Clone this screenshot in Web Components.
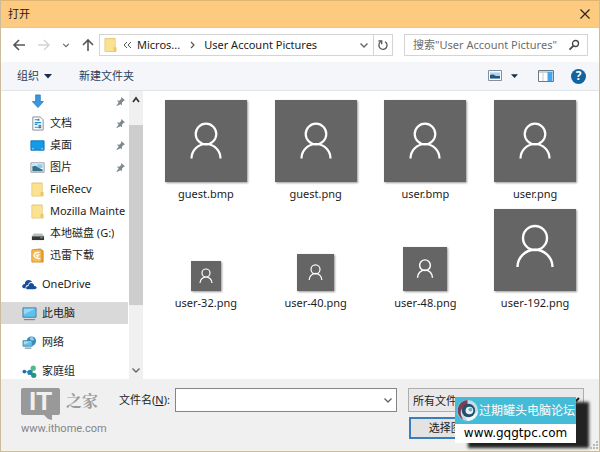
<!DOCTYPE html>
<html lang="zh-CN">
<head>
<meta charset="utf-8">
<title>打开</title>
<style>
html,body{margin:0;height:100%}
body{font:11px/16px "Noto Sans","Noto Sans CJK SC",sans-serif;color:#1c1c1c;background:#fff}
</style>
</head>
<body>
<open-dialog></open-dialog>
<script>
const ICONS = {
  back:['0 0 14 14','<path d="M13 7H2M7 2L2 7l5 5" fill="none" stroke="#555" stroke-width="1.6"/>'],
  forward:['0 0 14 14','<path d="M1 7h11M7 2l5 5-5 5" fill="none" stroke="#d2d2d2" stroke-width="1.4"/>'],
  up:['0 0 14 14','<path d="M7 13V2M2 7l5-5 5 5" fill="none" stroke="#555" stroke-width="1.6"/>'],
  down:['0 0 10 10','<path d="M1.500 3.500L5 7l3.500-3.500" fill="none" stroke="#666" stroke-width="1.4"/>'],
  chevUp:['0 0 10 10','<path d="M2 7l3-4 3 4" fill="none" stroke="#333" stroke-width="1.7"/>'],
  right:['0 0 10 10','<path d="M4 2l3 3-3 3" fill="none" stroke="#555" stroke-width="1.2"/>'],
  guillemet:['0 0 10 10','<path d="M5 2L2 5l3 3M9 2L6 5l3 3" fill="none" stroke="#555" stroke-width="1"/>'],
  caret:['0 0 10 10','<path d="M0 2.500h10L5 8z" fill="#1d2b4f"/>'],
  refresh:['0 0 12 12','<path d="M8 2.7A4.1 4.1 0 1 1 3.5 3M1.5 2h3.2v3.3" fill="none" stroke="#555" stroke-width="1.3"/>'],
  close:['0 0 12 12','<path d="M1.5 1.5l9 9M10.500 1.500l-9 9" fill="none" stroke="#2c2418" stroke-width="1.2"/>'],
  search:['0 0 12 12','<circle cx="7.500" cy="4.500" r="3" fill="none" stroke="#444" stroke-width="1.300"/><path d="M5.300 6.800L1.500 10.700" stroke="#444" stroke-width="1.700"/>'],
  folder:['0 0 14 16','<path d="M1 1h11v9l1 1v4H1z" fill="#f8dc80" stroke="#e0c065" stroke-width=".8"/><path d="M1.500 2h10v8l-1.500 1v3.500H1.500z" fill="#fbe292"/><path d="M10.500 10.500h2v4h-2z" fill="#e9c45f"/>'],
  download:['0 0 14 16','<path d="M5 1h5v7h3.300L7.500 14.500 1.500 8H5z" fill="#3b96e0" stroke="#2477be" stroke-width=".8"/>'],
  doc:['0 0 14 16','<path d="M2 1h8l3 3v11H2z" fill="#fff" stroke="#808b95"/><path d="M4 4h3M4 7h7M4 9h3M8 10h3M4 12h4" stroke="#258fd0" stroke-width="1.300"/><path d="M8 11h3v2H8zM7 3h2v2H7z" fill="#3d7298"/>'],
  desktop:['0 0 16 14','<path d="M1 2h14v10H1z" fill="#159ae8" stroke="#0776bd"/><path d="M2 10.500h2M12 10.500h2" stroke="#b7e5ff"/>'],
  image:['0 0 16 14','<path d="M1 2h14v10H1z" fill="#fff" stroke="#8c9299"/><path d="M2.500 3.500h11v4h-11z" fill="#91c8ea"/><path d="M2.500 6l3-1 3 2 5 2v2h-11z" fill="#367189"/><path d="M3 5l3-1 2 1" stroke="#fff" fill="none"/>'],
  drive:['0 0 14 16','<path d="M3 8h9l2 3H1z" fill="#b9bdc0"/><path d="M1 11h13v4H1z" fill="#343638"/><path d="M10 12.500h2.500" stroke="#65cf79"/>'],
  thunder:['0 0 14 16','<path d="M1 2l9-1 3 2v12H1z" fill="#e9a333" stroke="#c77a16" stroke-width=".8"/><path d="M1.500 2.500h9v12h-9z" fill="#f8bd57"/><path d="M9 5C6 4 4 6 3 8c2 3 4 4 7 3M9 7L6 8l2 2" fill="none" stroke="#fff" stroke-width="1.300"/>'],
  cloud:['0 0 16 12','<path d="M2 10C-1 9 0 5.500 3 5.500 3 .500 9 0 11 3.500 8 3 6.500 5 6.500 6.500 4 6.500 3.500 9 4 10z" fill="#174d9b"/><path d="M6 11c-2.500 0-2-3.500 1-3.500 0-4 5.500-4 6 0 3.500 0 3.500 3.500 0 3.500z" fill="#174d9b"/>'],
  pc:['0 0 16 16','<path d="M1 2h14v10H1z" fill="#5cc1ee" stroke="#567a91"/><path d="M2 3h12L2 9z" fill="#92dafa"/><path d="M2 14.500h12" stroke="#7e8990" stroke-width="1.300"/>'],
  network:['0 0 16 16','<circle cx="10" cy="6.500" r="5" fill="#378ac2"/><path d="M8 3l3-1 2 3-3 2z" fill="#93d4ed"/><path d="M1 6h10v6H1z" fill="#60bee9" stroke="#417f9e" stroke-width=".8"/><path d="M2 7h8l-8 3z" fill="#a6e0f6"/><path d="M3 14h7" stroke="#4a7890"/>'],
  home:['0 0 16 16','<path d="M4 8l6 1 2-4M10 9l2 4" stroke="#67b8c8" stroke-width="1.500" fill="none"/><circle cx="2.500" cy="8" r="2" fill="#286da6"/><circle cx="12" cy="4.500" r="2.800" fill="#55b98b"/><circle cx="8.500" cy="9" r="2.800" fill="#2485af"/><circle cx="12.500" cy="12" r="2.800" fill="#26957e"/>'],
  pin:['0 0 12 12','<path d="M7 1l4 4-1.500.3-2 2 .2 2.700L6 9 2 11 1.500 10.500 4 7 2 5l2.700.2 2-2z" fill="#7e8990"/>'],
  view:['0 0 14 12','<path d="M.5.500h13v10H.5z" fill="#f8fbff" stroke="#888e9c"/><path d="M2 2.500h10v6H2z" fill="#a9d3ef"/><path d="M2 5l3-.5 3 1.500h4v2.500H2z" fill="#235582"/>'],
  pane:['0 0 16 12','<path d="M.5.500h15v11H.5z" fill="#fff" stroke="#707880"/><path d="M1 1h14v2H1z" fill="#c8d4dd"/><path d="M9.500 2h5v9h-5z" fill="#44a5ed"/><path d="M5 2v9" stroke="#c8ccd0"/>'],
  user:['0 0 82 82','<circle cx="41" cy="34" r="10.300" fill="none" stroke="#fff" stroke-width="2.200"/><path d="M26.500 58.500a14.500 14.500 0 0 1 29 0" fill="none" stroke="#fff" stroke-width="2.200"/>'],
  userSmall:['0 0 30 30','<circle cx="15" cy="12" r="4" fill="none" stroke="#fff" stroke-width="1.200"/><path d="M9 22a6 6 0 0 1 12 0" fill="none" stroke="#fff" stroke-width="1.200"/>'],
  userMedium:['0 0 82 82','<circle cx="41" cy="34" r="10" fill="none" stroke="#fff" stroke-width="2.700"/><path d="M27 57.500a14 14.500 0 0 1 28 0" fill="none" stroke="#fff" stroke-width="2.700"/>'],
  userLarge:['0 0 82 82','<circle cx="41" cy="29" r="12" fill="none" stroke="#fff" stroke-width="2.400"/><path d="M23.500 58a17.300 17 0 0 1 35 0" fill="none" stroke="#fff" stroke-width="2.400"/>'],
  grip:['0 0 8 8','<path d="M6 0h2v2H6zM3 3h2v2H3zM6 3h2v2H6zM0 6h2v2H0zM3 6h2v2H3zM6 6h2v2H6z" fill="#b9b9b9"/>'],
  swirl:['0 0 24 24','<circle cx="12" cy="12" r="11" fill="#c4dce6"/><path d="M12 1A11 11 0 0 0 8 22c-5-6-4-14 4-16z" fill="#7c3d57"/><path d="M12 23a11 11 0 0 0 11-11c-4 6-9 8-13 6z" fill="#f2f7fa"/><circle cx="13" cy="12" r="7" fill="#254f6c"/><circle cx="14" cy="12" r="4" fill="#e7f3f7"/><circle cx="15" cy="11" r="2" fill="#69b5cd"/>']
};
const BASE = '*{box-sizing:border-box}button,input,select{font:inherit;color:inherit}button{border:0;padding:0;background:none;display:flex;align-items:center;justify-content:center}a{color:inherit;text-decoration:none}';
function define(name, html, setup){
  customElements.define(name, class extends HTMLElement{
    connectedCallback(){
      if(this.shadowRoot) return;
      const root=this.attachShadow({mode:'open'}), t=document.createElement('template');
      const markup=typeof html==='function'?html(this):html;
      t.innerHTML=markup.replace('<style>','<style>'+BASE);
      root.append(t.content.cloneNode(true));
      if(setup) setup(this,root);
    }
  });
}
define('ui-icon','<style>:host{display:block;flex:none;width:14px;height:14px}svg{display:block;width:100%;height:100%}</style><svg aria-hidden="true"></svg>',(el,root)=>{
  const [box,art]=ICONS[el.getAttribute('name')];
  const svg=root.querySelector('svg'); svg.setAttribute('viewBox',box); svg.innerHTML=art;
});
define('title-bar',`<style>:host{display:flex;align-items:center;justify-content:space-between;box-sizing:border-box;height:28px;padding:0 8px 0 7px;background:#fdcb80;border-top:1px solid #dfb571;border-bottom:1px solid #f3c47c}h1{font:inherit;margin:0}ui-icon{width:12px;height:12px}</style>
<h1><slot></slot></h1><button aria-label="关闭"><ui-icon name="close"></ui-icon></button>`);
define('address-bar',`<style>
:host{display:flex;align-items:center;height:34px;padding:0 11px;background:#fff}
.nav{display:flex;align-items:center;width:87px;gap:11px}.nav .s{width:8px;height:8px}
.s{width:10px;height:10px}
.path{flex:288 1 0;min-width:0;margin-right:11px;display:flex;align-items:center;height:22px;border:1px solid #d4d4d4;padding-left:4px}
.path nav{display:flex;align-items:center;gap:5px;flex:1;white-space:nowrap}
.path .f{width:13px;height:16px}.path .sep{margin:0 2px}
.r{width:19px;height:20px;border-left:1px solid #d4d4d4;margin-left:4px}.r ui-icon{width:12px;height:12px}
.search{flex:167 1 0;min-width:0;display:flex;align-items:center;height:22px;border:1px solid #d4d4d4;padding:0 7px 0 8px}
input{flex:1;min-width:0;border:0;padding:0;outline:0;background:none}input::placeholder{color:#6d6d6d;opacity:1}
.search ui-icon{width:12px;height:12px}
</style>
<div class="nav"><button aria-label="后退"><ui-icon name="back"></ui-icon></button><button aria-label="前进"><ui-icon name="forward"></ui-icon></button><button aria-label="历史"><ui-icon class="s" name="down"></ui-icon></button><button aria-label="上移"><ui-icon name="up"></ui-icon></button></div>
<div class="path"><nav><ui-icon class="f" name="folder"></ui-icon><ui-icon class="s" name="guillemet"></ui-icon><a href="#m">Micros...</a><ui-icon class="s sep" name="right"></ui-icon><a href="#u">User Account Pictures</a></nav><button aria-label="展开"><ui-icon class="s" name="down"></ui-icon></button><button class="r" aria-label="刷新"><ui-icon name="refresh"></ui-icon></button></div>
<div class="search"><input type="text" aria-label="搜索" placeholder='搜索"User Account Pictures"'><ui-icon name="search"></ui-icon></div>`);
define('tool-bar',`<style>:host{display:flex;align-items:center;box-sizing:border-box;height:29px;padding:0 13px 0 16px;background:#f4f6f9;border-bottom:1px solid #e1e6ea;color:#2b3d5c}
.org{gap:5px;margin-right:27px}.c{width:8px;height:8px}.end{display:flex;align-items:center;margin-left:auto}.v{width:14px;height:12px}.p{width:16px;height:12px}
.end .c{width:7px;margin:0 20px 0 9px}.help{width:15px;height:15px;border-radius:50%;background:#12639f;color:#fff;font-weight:bold;font-size:12px;margin-left:17px}</style>
<button class="org">组织<ui-icon class="c" name="caret"></ui-icon></button><button>新建文件夹</button>
<div class="end"><button aria-label="视图"><ui-icon class="v" name="view"></ui-icon></button><button aria-label="更多视图"><ui-icon class="c" name="caret"></ui-icon></button><button aria-label="预览窗格"><ui-icon class="p" name="pane"></ui-icon></button><button class="help" aria-label="帮助">?</button></div>`);
define('nav-item',el=>`<style>:host{display:block;height:22px}:host([root]){margin-bottom:7px}
a{display:flex;align-items:center;height:100%;padding-left:29px;gap:5px;white-space:nowrap;overflow:hidden}
:host([root]) a{padding-left:21px}:host([selected]) a{background:#d9d9d9}
ui-icon{width:15px;height:15px}.pin{width:11px;height:11px;margin:0 2px 0 auto}span{overflow:hidden}</style>
<a href="#"><ui-icon name="${el.getAttribute('icon')}"></ui-icon><span><slot></slot></span>${el.hasAttribute('pinned')?'<ui-icon class="pin" name="pin"></ui-icon>':''}</a>`);
define('nav-pane',`<style>:host{display:flex;width:142px;flex:none;min-height:0;overflow:hidden}
nav{flex:1;min-width:0;overflow:hidden}nav>div{margin:-1px 0 7px}
.bar{width:14px;background:#f0f0f0;display:flex;flex-direction:column;align-items:center;margin-left:1px}
.bar ui-icon{width:10px;height:10px;margin:4px 0}.thumb{width:100%;flex:181;background:#cdcdcd;margin-top:16px}.rest{flex:56}
</style><nav><div>
<nav-item icon="download" pinned></nav-item><nav-item icon="doc" pinned>文档</nav-item><nav-item icon="desktop" pinned>桌面</nav-item><nav-item icon="image" pinned>图片</nav-item><nav-item icon="folder">FileRecv</nav-item><nav-item icon="folder">Mozilla Mainte</nav-item><nav-item icon="drive">本地磁盘 (G:)</nav-item><nav-item icon="thunder">迅雷下载</nav-item></div>
<nav-item root icon="cloud">OneDrive</nav-item><nav-item root selected icon="pc">此电脑</nav-item><nav-item root icon="network">网络</nav-item><nav-item root icon="home">家庭组</nav-item></nav>
<div class="bar"><ui-icon name="chevUp"></ui-icon><div class="thumb"></div><div class="rest"></div><ui-icon name="down"></ui-icon></div>`);
define('file-tile',el=>`<style>:host{display:flex;flex-direction:column;align-items:center}
.area{height:82px;display:flex;align-items:flex-end}.thumb{background:#656565;box-shadow:1px 1px 2px #999}.thumb ui-icon{width:100%;height:100%}
.name{margin-top:4px;height:22px;line-height:16px}</style><div class="area"><div class="thumb"><ui-icon name="${el.getAttribute('art')||'user'}"></ui-icon></div></div><div class="name"><slot></slot></div>`,(el,root)=>{
  const s=el.getAttribute('size')||'82';const t=root.querySelector('.thumb');t.style.width=t.style.height=s+'px';
});
define('file-grid',`<style>:host{display:grid;grid-template-columns:repeat(4,1fr);align-content:start;row-gap:1px;flex:1;min-width:0;padding:9px 9px 0 8px;background:#fff}</style><slot></slot>`);
define('ithome-mark',`<style>:host{display:block;color:#999;width:100px;padding:6px 0 0 20px}
.logo{display:flex;align-items:center;gap:6px;height:32px}.it{position:relative;background:#999;color:#f0f0f0;width:39px;height:27px;border-radius:2px;text-align:center;font:bold 26px/27px "Liberation Sans",sans-serif}
.it::after{content:"";position:absolute;left:23px;top:27px;border:4px solid transparent;border-top-color:#999;border-right-color:#999;border-bottom-width:1px}
.zh{font:bold 16px/24px "Noto Serif CJK SC","Noto Sans CJK SC",serif}.url{margin-top:4px;font:11px/16px Roboto,sans-serif;color:#858585}</style><div class="logo"><span class="it">IT</span><span class="zh">之家</span></div><div class="url">www.ithome.com</div>`);
define('forum-mark',`<style>:host{display:block;width:121px;box-shadow:13px 5px 3px #222}
.top{display:flex;align-items:center;height:27px;background:#44bcd8;color:#fff;font-size:12px;white-space:nowrap;padding-left:1px}.top ui-icon{width:23px;height:23px}
.url{background:#fff;color:#000;height:19px;font:12px/19px "DejaVu Sans",sans-serif;text-align:center}</style><div class="top"><ui-icon name="swirl"></ui-icon><span>过期罐头电脑论坛</span></div><div class="url">www.gqgtpc.com</div>`);
define('dialog-footer',`<style>:host{display:flex;position:relative;box-sizing:border-box;height:72px;background:#f0f0f0;border-bottom:1px solid #f6f3e2}
.form{flex:1;min-width:0;display:grid;grid-template-columns:auto 228fr 176fr;column-gap:5px;row-gap:5px;align-content:start;padding:9px 15px 0 18px}
label{line-height:24px}ithome-mark{box-sizing:border-box;flex:none}
.combo{display:flex;height:24px;border:1px solid #858585;background:#fff;margin-right:6px}.combo input{flex:1;min-width:0;border:0;outline:0;padding:0 4px;background:none}.combo ui-icon{width:10px;height:10px;margin:0 3px}
select{height:24px;width:100%;min-width:0;border:1px solid #adadad;background:#e9e9e9;border-radius:0;padding:0}
.acts{grid-column:3;display:grid;grid-template-columns:1fr 1fr;gap:8px;padding-left:1px}.acts button{height:22px;border:1px solid #adadad;background:#e3e3e3}.acts .ok{border:2px solid #3a7ebd}
forum-mark{position:absolute;right:23px;top:18px}
.grip{position:absolute;right:1px;bottom:1px;width:8px;height:8px}
</style><ithome-mark></ithome-mark>
<div class="form"><label for="fn">文件名(<u>N</u>):</label><div class="combo"><input id="fn" type="text"><button aria-label="展开文件名"><ui-icon name="down"></ui-icon></button></div><select aria-label="文件类型"><option>所有文件 (*.bmp;*.gif;*.jpg;*.png)</option></select><div class="acts"><button class="ok">选择图片</button><button aria-label="取消"></button></div></div>
<forum-mark></forum-mark><ui-icon class="grip" name="grip"></ui-icon>`);
define('open-dialog',`<style>:host{display:flex;flex-direction:column;box-sizing:border-box;min-height:100vh;border:1px solid #cdbb9e;border-top:0}main{display:flex;flex:1 1 0;min-height:0}</style>
<title-bar>打开</title-bar><address-bar></address-bar><tool-bar></tool-bar>
<main><nav-pane></nav-pane><file-grid>
<file-tile>guest.bmp</file-tile><file-tile>guest.png</file-tile><file-tile>user.bmp</file-tile><file-tile>user.png</file-tile>
<file-tile size="30" art="userSmall">user-32.png</file-tile><file-tile size="37" art="userMedium">user-40.png</file-tile><file-tile size="44" art="userMedium">user-48.png</file-tile><file-tile art="userLarge">user-192.png</file-tile>
</file-grid></main><dialog-footer></dialog-footer>`);
</script>
</body>
</html>
